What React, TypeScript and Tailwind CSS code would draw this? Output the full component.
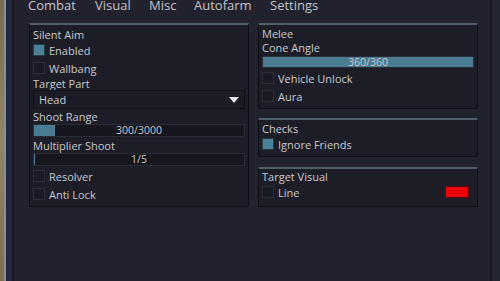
import React from "react";

const font = { fontFamily: "'Open Sans', Lato, sans-serif" };

function Check({ on, label }: { on?: boolean; label: string }) {
  return (
    <div className="flex items-center h-[18px] gap-[4px]">
      <div
        className={
          "w-[12px] h-[12px] border " +
          (on ? "bg-[#4a8198] border-[#2a3c48]" : "bg-[#1a1a24] border-[#2c2e3a]")
        }
      />
      <span className="text-[11px] text-[#c9c9cc] leading-none">{label}</span>
    </div>
  );
}

function Label({ children }: { children: React.ReactNode }) {
  return <div className="text-[11px] text-[#c9c9cc] leading-none h-[14px] flex items-center">{children}</div>;
}

function Slider({ pct, text }: { pct: number; text: string }) {
  return (
    <div className="relative h-[13px] bg-[#15161e] border border-[#2a2c38] my-[1px]">
      <div className="absolute left-0 top-0 bottom-0 bg-[#4a7c93]" style={{ width: pct + "%" }} />
      <div className="absolute inset-0 flex items-center justify-center text-[10.5px] text-[#c9c9cc] leading-none">
        {text}
      </div>
    </div>
  );
}

function Panel({ children, className = "" }: { children: React.ReactNode; className?: string }) {
  return (
    <div
      className={
        "bg-[#1c1d27] border border-[#0e0f15] border-t-2 border-t-[#4e5f6c] px-[3px] pt-[2px] pb-[3px] flex flex-col " +
        className
      }
    >
      {children}
    </div>
  );
}

export default function App() {
  return (
    <div className="w-[500px] h-[281px] overflow-hidden flex bg-[#21222d]" style={font}>
      <div className="w-[4px] h-full bg-gradient-to-b from-[#7a6a50] via-[#948564] to-[#7a7050]" />
      <div className="w-[2px] h-full bg-[#8c8f90]" />
      <div className="w-[6px] h-full bg-[#242742]" />
      <div className="w-[2px] h-full bg-[#181922]" />
      <div className="flex-1 flex flex-col bg-[#21222d]">
        <div className="h-[20px] flex items-start pl-[14px] -mt-[5px] text-[13px] text-[#c3c4c8] leading-[20px]">
          <span className="w-[67px]">Combat</span>
          <span className="w-[54px]">Visual</span>
          <span className="w-[45px]">Misc</span>
          <span className="w-[76px]">Autofarm</span>
          <span>Settings</span>
        </div>
        <div className="flex gap-[9px] pl-[15px] mt-[8px]">
          <Panel className="w-[220px] h-[184px]">
            <Label>Silent Aim</Label>
            <Check on label="Enabled" />
            <Check label="Wallbang" />
            <div className="-mt-[1px]">
              <Label>Target Part</Label>
            </div>
            <div className="h-[19px] bg-[#1a1b25] border border-[#0e0f15] flex items-center justify-between px-[5px]">
              <span className="text-[11px] text-[#c9c9cc] leading-none">Head</span>
              <svg width="10" height="6" viewBox="0 0 10 6">
                <path d="M0 0 L10 0 L5 6 Z" fill="#e6e6ea" />
              </svg>
            </div>
            <Label>Shoot Range</Label>
            <Slider pct={10} text="300/3000" />
            <Label>Multiplier Shoot</Label>
            <Slider pct={0.5} text="1/5" />
            <Check label="Resolver" />
            <Check label="Anti Lock" />
          </Panel>
          <div className="w-[220px] flex flex-col">
            <Panel className="h-[86px]">
              <Label>Melee</Label>
              <Label>Cone Angle</Label>
              <Slider pct={100} text="360/360" />
              <Check label="Vehicle Unlock" />
              <Check label="Aura" />
            </Panel>
            <Panel className="h-[39px] mt-[9px]">
              <Label>Checks</Label>
              <Check on label="Ignore Friends" />
            </Panel>
            <Panel className="h-[40px] mt-[10px] !pt-0">
              <Label>Target Visual</Label>
              <div className="flex items-center justify-between pr-[5px]">
                <Check label="Line" />
                <div className="w-[24px] h-[12px] bg-[#e8000a] border border-[#5a0a0a]" />
              </div>
            </Panel>
          </div>
        </div>
      </div>
      <div className="w-[2px] h-full bg-[#15161e]" />
      <div className="w-[8px] h-full bg-[#232533]" />
    </div>
  );
}
